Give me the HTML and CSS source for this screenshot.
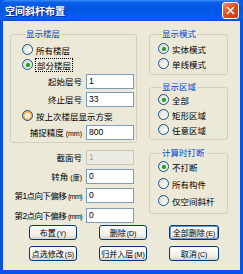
FILE: index.html
```html
<!DOCTYPE html>
<html lang="zh-CN">
  <head>
    <meta charset="UTF-8" />
    <title>空间斜杆布置</title>
    <link rel="stylesheet" href="styles.css">
  </head>
  <body>
    <div class="window">
      <!-- 标题栏 -->
      <div class="titlebar">
        <span class="title">空间斜杆布置</span>
        <span class="close">
          <svg width="9" height="9" viewBox="0 0 9 9">
            <path d="M1 1L8 8M8 1L1 8" stroke="#fff" stroke-width="1.6" />
          </svg>
        </span>
      </div>

      <div class="body">
        <div class="columns">
          <!-- 左侧 -->
          <div class="left">
            <fieldset class="group floors">
              <legend>显示楼层</legend>
              <div class="radio"><span class="dot"></span>所有楼层</div>
              <div class="radio checked"><span class="dot"></span><span class="focus">部分楼层</span></div>
              <div class="field"><span>起始层号</span><span class="input">1</span></div>
              <div class="field"><span>终止层号</span><span class="input">33</span></div>
              <div class="radio hover"><span class="dot"></span>按上次楼层显示方案</div>
              <div class="field"><span>捕捉精度<span class="unit">(mm)</span></span><span class="input">800</span></div>
            </fieldset>

            <div class="params">
              <div class="field"><span>截面号</span><span class="input disabled">1</span></div>
              <div class="field"><span>转角<span class="unit">(度)</span></span><span class="input">0</span></div>
              <div class="field"><span class="long">第1点向下偏移<span class="unit">(mm)</span></span><span class="input">0</span></div>
              <div class="field"><span class="long">第2点向下偏移<span class="unit">(mm)</span></span><span class="input">0</span></div>
            </div>
          </div>

          <!-- 右侧 -->
          <div class="right">
            <fieldset class="group mode">
              <legend>显示模式</legend>
              <div class="radio checked"><span class="dot"></span>实体模式</div>
              <div class="radio"><span class="dot"></span>单线模式</div>
            </fieldset>

            <fieldset class="group area">
              <legend>显示区域</legend>
              <div class="radio checked"><span class="dot"></span>全部</div>
              <div class="radio"><span class="dot"></span>矩形区域</div>
              <div class="radio"><span class="dot"></span>任意区域</div>
            </fieldset>

            <fieldset class="group breakup">
              <legend>计算时打断</legend>
              <div class="radio checked"><span class="dot"></span>不打断</div>
              <div class="radio"><span class="dot"></span>所有构件</div>
              <div class="radio"><span class="dot"></span>仅空间斜杆</div>
            </fieldset>
          </div>
        </div>

        <!-- 按钮 -->
        <div class="buttons">
          <button class="btn">布置<span class="unit">(Y)</span></button>
          <button class="btn">删除<span class="unit">(D)</span></button>
          <button class="btn wide default">全部删除<span class="unit">(E)</span></button>
          <button class="btn">点选修改<span class="unit">(S)</span></button>
          <button class="btn">归并入层<span class="unit">(M)</span></button>
          <button class="btn wide">取消<span class="unit">(C)</span></button>
        </div>
      </div>
    </div>
  </body>
</html>
```

FILE: styles.css
```css
body {
  margin: 0;
  font-family: "Liberation Sans", "Noto Sans CJK SC", sans-serif;
  font-size: 8.5px;
  color: #000;
}
.window {
  width: 243px;
  height: 274px;
  background: #0553e6;
  display: flex;
  flex-direction: column;
}
.titlebar {
  height: 21px;
  flex: none;
  display: flex;
  align-items: center;
  justify-content: space-between;
  padding: 0 4px 0 5px;
  border-radius: 6px 6px 0 0;
  background: linear-gradient(#3a8cf8 0, #0a5fe8 12%, #0054e3 50%, #0660f0 85%, #0050d8 100%);
}
.title {
  color: #fff;
  font-weight: bold;
  font-size: 10px;
  text-shadow: 1px 1px #0a2a8a;
}
.close {
  width: 15px;
  height: 15px;
  border: 1px solid #fff;
  border-radius: 3px;
  background: linear-gradient(135deg, #f28a6c, #e04a23 50%, #c43b14);
  display: flex;
  align-items: center;
  justify-content: center;
}
.body {
  flex: 1;
  margin: 0 3px 4px;
  background: #ece9d8;
  padding: 8px 0 0 7px;
  display: flex;
  flex-direction: column;
}
.columns {
  display: flex;
  gap: 12px;
}
.left {
  width: 127px;
}
.right {
  width: 79px;
}
.group {
  margin: 0;
  border: 1px solid #d0d0bf;
  border-radius: 3px;
  min-width: 0;
}
.group legend {
  color: #0046d5;
  line-height: 10px;
  padding: 0 1px;
  margin-left: 3px;
}
.floors {
  padding: 3px 2px 1px 11px;
}
.floors .field:first-of-type {
  margin-top: -2px;
}
.mode {
  padding: 2px 0 3px 8px;
}
.area {
  margin-top: 7px;
  padding: 0 0 2px 8px;
}
.breakup {
  margin-top: 8px;
  padding: 0 0 4px 8px;
}
.radio {
  height: 15px;
  display: flex;
  align-items: center;
  white-space: nowrap;
}
.breakup .radio {
  height: 17px;
}
.dot {
  width: 9px;
  height: 9px;
  border: 1px solid #1c5180;
  border-radius: 50%;
  background: linear-gradient(135deg, #dcdcd5, #fff);
  margin-right: 3px;
  display: flex;
  align-items: center;
  justify-content: center;
  flex: none;
}
.checked .dot::after {
  content: "";
  width: 4px;
  height: 4px;
  border-radius: 50%;
  background: #21a121;
  box-shadow: 0 0 1px #4cd04c;
}
.hover .dot {
  box-shadow: inset 0 0 0 1.5px #f8b636;
}
.focus {
  outline: 1px dotted #000;
  padding: 0 1px;
}
.unit {
  font-size: 7px;
  margin-left: 2px;
}
.long {
  letter-spacing: -0.6px;
}
.field {
  height: 18px;
  display: flex;
  align-items: center;
  justify-content: flex-end;
  gap: 4px;
  white-space: nowrap;
}
.input {
  width: 44px;
  height: 13px;
  line-height: 13px;
  border: 1px solid #7f9db9;
  background: #fff;
  padding-left: 2px;
  flex: none;
}
.input.disabled {
  background: #ebebe4;
  border-color: #c9c7ba;
  color: #aca899;
}
.params {
  margin-top: 5px;
  padding-right: 3px;
}
.params .field + .field {
  margin-top: 1px;
}
.params .field:nth-child(4) {
  margin-top: 2px;
}
.buttons {
  margin-top: auto;
  margin-bottom: 9px;
  padding-left: 19px;
  display: grid;
  grid-template-columns: 48px 48px 50px;
  column-gap: 22px;
  row-gap: 6px;
}
.btn {
  height: 15px;
  padding: 0;
  font: inherit;
  font-size: 8px;
  color: #000;
  border: 1px solid #003c74;
  border-radius: 3px;
  background: linear-gradient(#fff 0%, #f1efe8 70%, #d8d2c6 100%);
  white-space: nowrap;
}
.btn .unit {
  margin-left: 1px;
}
.btn.default {
  box-shadow: inset 0 0 0 1px #6e93d8;
}
```
